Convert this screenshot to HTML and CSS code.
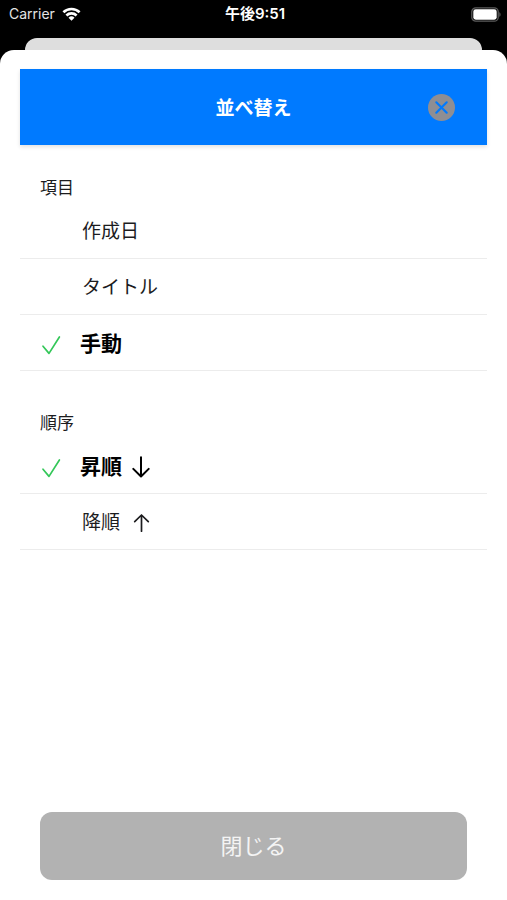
FILE: index.html
```html
<!DOCTYPE html>
<html lang="ja">
<head>
<meta charset="utf-8">
<meta name="viewport" content="width=device-width, initial-scale=1">
<title>並べ替え</title>
<link rel="stylesheet" href="styles.css">
</head>
<body>
<div class="status">
  <div class="carrier">
    <span>Carrier</span>
    <svg width="19" height="14" viewBox="0 0 18 14" fill="none" stroke="#fff" stroke-width="2.6" aria-hidden="true">
      <path d="M.9 5.3a11.6 11.6 0 0 1 16.2 0"/>
      <path d="M3.9 8.5a7.3 7.3 0 0 1 10.2 0"/>
      <path d="M9 13.7 6 10.7a4.3 4.3 0 0 1 6 0z" fill="#fff" stroke="none"/>
    </svg>
  </div>
  <time class="time">午後9:51</time>
  <svg class="battery" width="30" height="15" viewBox="0 0 30 15" aria-hidden="true">
    <rect x=".8" y=".8" width="26.4" height="13.4" rx="4" fill="none" stroke="#5c5c5c" stroke-width="1.3"/>
    <rect x="2.3" y="2.3" width="23.4" height="10.4" rx="2.4" fill="#fff"/>
    <path d="M28.3 5.2c1.7.6 1.7 4 0 4.6z" fill="#5c5c5c"/>
  </svg>
</div>
<div class="behind"></div>
<main class="sheet">
  <header class="header">
    <h1>並べ替え</h1>
    <button class="dismiss" type="button" aria-label="閉じる">
      <svg width="27" height="27" viewBox="0 0 27 27" aria-hidden="true">
        <circle cx="13.5" cy="13.5" r="13.5" fill="#8e8e93"/>
        <path d="M8.3 8.3l10.4 10.4M18.7 8.3 8.3 18.7" stroke="#007aff" stroke-width="2.2" stroke-linecap="round"/>
      </svg>
    </button>
  </header>
  <form class="form">
    <fieldset class="group">
      <legend>項目</legend>
      <label class="row">
        <input type="radio" name="field">
        <svg class="check" width="20" height="20" viewBox="0 0 20 20" aria-hidden="true"><path d="M2 11.2l6 7.2L18.4 2"/></svg>
        <span>作成日</span>
      </label>
      <label class="row">
        <input type="radio" name="field">
        <svg class="check" width="20" height="20" viewBox="0 0 20 20" aria-hidden="true"><path d="M2 11.2l6 7.2L18.4 2"/></svg>
        <span>タイトル</span>
      </label>
      <label class="row">
        <input type="radio" name="field" checked>
        <svg class="check" width="20" height="20" viewBox="0 0 20 20" aria-hidden="true"><path d="M2 11.2l6 7.2L18.4 2"/></svg>
        <span>手動</span>
      </label>
    </fieldset>
    <fieldset class="group">
      <legend>順序</legend>
      <label class="row">
        <input type="radio" name="order" checked>
        <svg class="check" width="20" height="20" viewBox="0 0 20 20" aria-hidden="true"><path d="M2 11.2l6 7.2L18.4 2"/></svg>
        <span>昇順</span>
        <svg class="arrow" width="18" height="22" viewBox="0 0 18 22" aria-hidden="true"><path d="M9 1.3v19M1.3 12.9 9 20.5l7.7-7.6" stroke-width="2"/></svg>
      </label>
      <label class="row">
        <input type="radio" name="order">
        <svg class="check" width="20" height="20" viewBox="0 0 20 20" aria-hidden="true"><path d="M2 11.2l6 7.2L18.4 2"/></svg>
        <span>降順</span>
        <svg class="arrow" width="20" height="22" viewBox="0 0 20 22" aria-hidden="true"><path d="M11.5 19.2v-16M4.7 9.6l6.8-6.6 6.8 6.6" stroke-width="1.7"/></svg>
      </label>
    </fieldset>
  </form>
  <button class="close" type="button">閉じる</button>
</main>
</body>
</html>
```

FILE: styles.css
```css
* {
  box-sizing: border-box;
}

body {
  margin: 0;
  min-height: 100vh;
  display: flex;
  flex-direction: column;
  background: #000;
  color: #1c1c1e;
  font-family: Inter, "Noto Sans CJK JP", sans-serif;
}

button {
  border: 0;
  padding: 0;
  font: inherit;
  cursor: pointer;
}

.status {
  display: grid;
  grid-template-columns: 1fr auto 1fr;
  align-items: center;
  height: 38px;
  padding: 0 6px 10px 9px;
  color: #fff;
  font-size: 14px;
  line-height: 20px;
}

.carrier {
  display: flex;
  align-items: center;
  gap: 7px;
  color: #e4e4e4;
}

.time {
  font-size: 15px;
  font-weight: 600;
}

.battery {
  justify-self: end;
}

.behind {
  height: 12px;
  margin: 0 25px;
  border-radius: 12px 12px 0 0;
  background: #dedede;
}

.sheet {
  flex: 1;
  display: flex;
  flex-direction: column;
  padding: 19px 20px 20px;
  border-radius: 14px 14px 0 0;
  background: #fff;
}

.header {
  display: grid;
  grid-template-columns: 1fr auto 1fr;
  align-items: center;
  height: 76px;
  padding: 0 32px;
  background: #007aff;
  box-shadow: 0 2px 4px rgba(0, 0, 0, 0.12);
  color: #fff;
}

.header h1 {
  grid-column: 2;
  margin: 0;
  padding-top: 4px;
  font-size: 19px;
  line-height: 28px;
  font-weight: 700;
}

.dismiss {
  justify-self: end;
  display: flex;
  border-radius: 50%;
  background: none;
}

.form {
  flex: 1;
  display: flex;
  flex-direction: column;
  gap: 40px;
  padding: 31px 0 20px;
}

.group {
  min-width: 0;
  margin: 0;
  padding: 0;
  border: 0;
}

.group legend {
  padding: 0 20px 3px;
  font-size: 17px;
  line-height: 24px;
}

.row {
  display: flex;
  align-items: center;
  height: 56px;
  padding: 2px 21px 0;
  border-bottom: 1px solid #ececec;
  font-size: 19px;
  line-height: 28px;
  cursor: pointer;
}

.row input {
  appearance: none;
  width: 0;
  height: 0;
  margin: 0;
}

.check {
  margin: 2px 21px 0 0;
  fill: none;
  stroke: #34c759;
  stroke-width: 1.7;
  stroke-linecap: round;
  stroke-linejoin: round;
  visibility: hidden;
}

.row:has(:checked) {
  color: #000;
  font-size: 21px;
  font-weight: 700;
}

.row :checked + .check {
  visibility: visible;
  margin-right: 19px;
}

.arrow {
  margin-left: 10px;
  fill: none;
  stroke: currentColor;
  stroke-linecap: round;
  stroke-linejoin: round;
}

.close {
  height: 68px;
  margin: 0 20px;
  border-radius: 12px;
  background: #b2b2b2;
  color: #f4f4f4;
  font-size: 22px;
  line-height: 32px;
}
```
